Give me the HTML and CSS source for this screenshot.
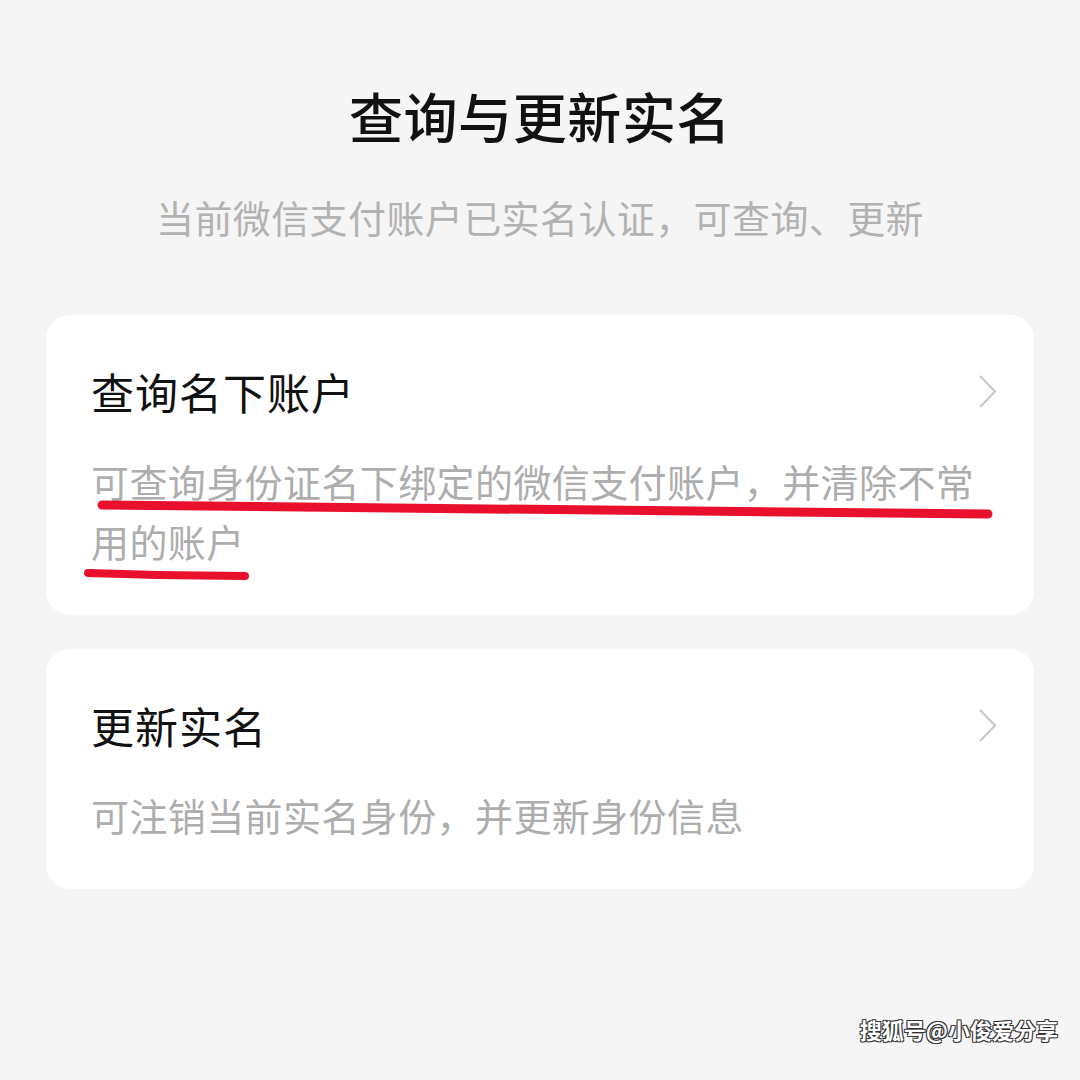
FILE: index.html
```html
<!DOCTYPE html>
<html lang="zh-CN">
<head>
<meta charset="utf-8">
<link rel="stylesheet" href="styles.css">
</head>
<body>
<div class="page">
  <header class="header">
    <h1 class="title">查询与更新实名</h1>
    <p class="subtitle">当前微信支付账户已实名认证，可查询、更新</p>
  </header>
  <div class="cards">
    <div class="card">
      <div class="card-text">
        <div class="card-title">查询名下账户</div>
        <div class="card-desc">可查询身份证名下绑定的微信支付账户，并清除不常用的账户</div>
      </div>
      <svg class="chevron" width="20" height="36" viewBox="0 0 20 36"><path d="M2 2 L17 17.5 L2 33" fill="none" stroke="#c9c9c9" stroke-width="2.2"/></svg>
    </div>
    <div class="card">
      <div class="card-text">
        <div class="card-title">更新实名</div>
        <div class="card-desc">可注销当前实名身份，并更新身份信息</div>
      </div>
      <svg class="chevron" width="20" height="36" viewBox="0 0 20 36"><path d="M2 2 L17 17.5 L2 33" fill="none" stroke="#c9c9c9" stroke-width="2.2"/></svg>
    </div>
  </div>
  <svg class="marks" width="1080" height="1080" viewBox="0 0 1080 1080">
    <path d="M102 505 C 300 507, 600 510, 988 514" fill="none" stroke="#e8102c" stroke-width="9" stroke-linecap="round"/>
    <path d="M88 573 C 140 575, 200 576, 245 576" fill="none" stroke="#e8102c" stroke-width="8" stroke-linecap="round"/>
  </svg>
  <div class="watermark">搜狐号@小俊爱分享</div>
</div>
</body>
</html>
```
FILE: styles.css
```css
html, body {
  margin: 0;
  padding: 0;
  background: #f5f5f5;
}
body {
  font-family: "Noto Sans CJK SC", "Noto Sans", sans-serif;
  width: 1080px;
  height: 1080px;
  overflow: hidden;
}
.page {
  position: relative;
  width: 1080px;
  height: 1080px;
  box-sizing: border-box;
  padding: 81px 46px 0 46px;
}
.header {
  text-align: center;
}
.title {
  margin: 0;
  font-size: 54px;
  line-height: 70px;
  font-weight: 500;
  color: #111;
  letter-spacing: 0.6px;
}
.subtitle {
  margin: 41px 0 0 0;
  font-size: 38px;
  line-height: 50px;
  color: #b2b2b2;
  font-weight: 400;
  letter-spacing: 0.4px;
}
.cards {
  margin-top: 73px;
  display: flex;
  flex-direction: column;
  gap: 34px;
}
.card {
  background: #ffffff;
  border-radius: 24px;
  padding: 46px 36px 44px 45px;
  display: flex;
  align-items: flex-start;
}
.card-text {
  flex: 1;
  min-width: 0;
  display: flex;
  flex-direction: column;
  gap: 30px;
}
.card-title {
  font-size: 43px;
  line-height: 60px;
  color: #111;
  font-weight: 400;
  letter-spacing: 1px;
}
.card-desc {
  font-size: 38px;
  line-height: 60px;
  color: #adadad;
  letter-spacing: 0.4px;
}
.chevron {
  flex: none;
  margin-top: 13px;
}
.marks {
  position: absolute;
  left: 0;
  top: 0;
  pointer-events: none;
}
.watermark {
  position: absolute;
  right: 22px;
  bottom: 36px;
  font-size: 22px;
  line-height: 30px;
  font-weight: 700;
  color: #ffffff;
  text-shadow: 1px 1px 0 #333, -1px -1px 0 #333, 1px -1px 0 #333, -1px 1px 0 #333;
}
```
